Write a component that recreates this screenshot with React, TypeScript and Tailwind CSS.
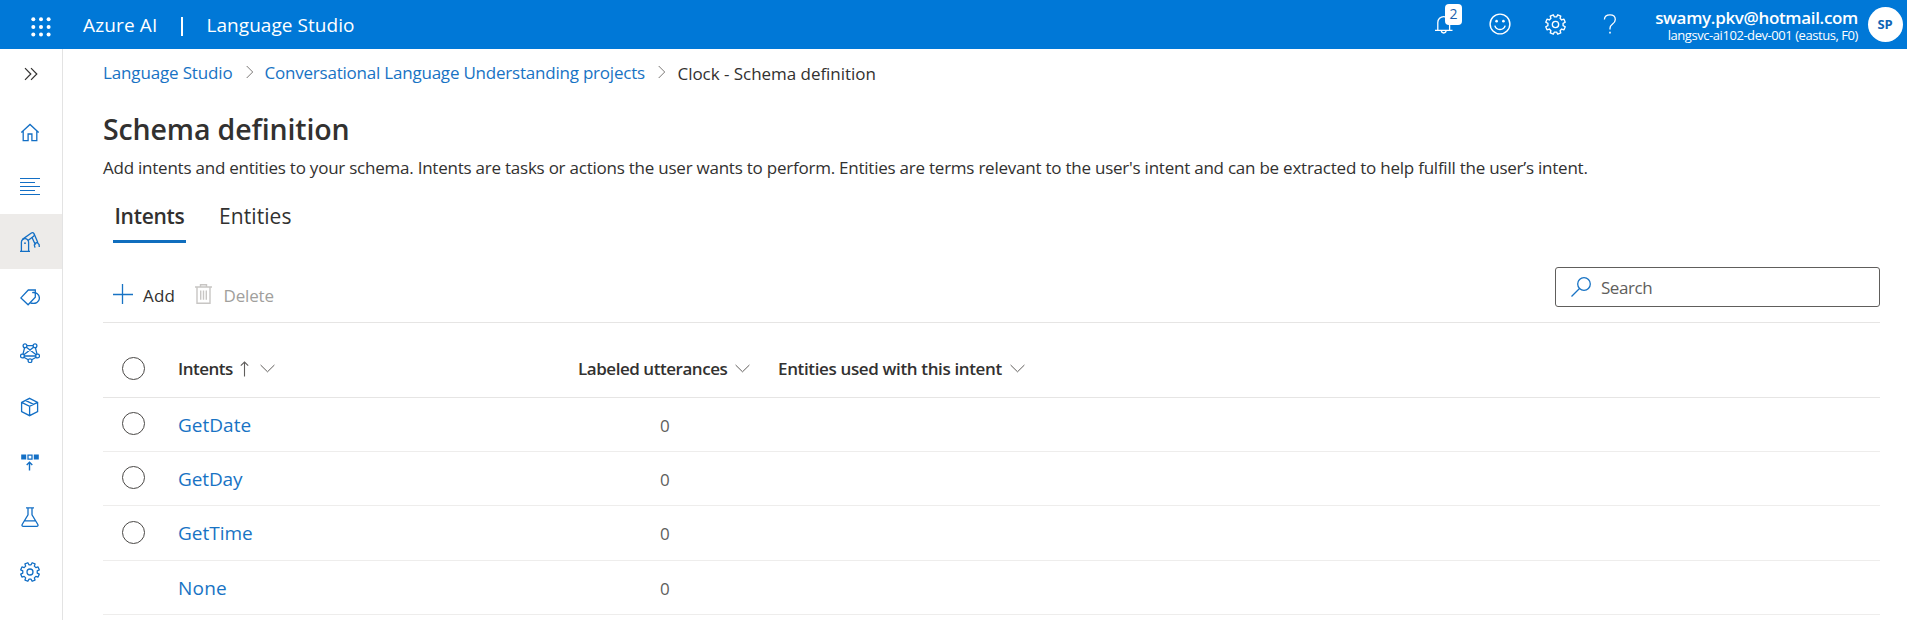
import type { ReactNode } from 'react';

function gearPath(c: number, outer: number, inner: number): string {
  const pts: string[] = [];
  for (let k = 0; k < 8; k++) {
    const mid = 22.5 + k * 45;
    const corners: [number, number][] = [
      [mid - 14, inner],
      [mid - 9.5, outer],
      [mid + 9.5, outer],
      [mid + 14, inner],
    ];
    for (const [deg, r] of corners) {
      const a = (deg * Math.PI) / 180;
      pts.push(`${(c + r * Math.cos(a)).toFixed(2)} ${(c + r * Math.sin(a)).toFixed(2)}`);
    }
  }
  return `M${pts.join('L')}Z`;
}

function Icon({ children, className = 'h-5 w-5' }: { children: ReactNode; className?: string }) {
  return (
    <svg
      viewBox="0 0 20 20"
      fill="none"
      stroke="currentColor"
      strokeWidth={1.3}
      className={`shrink-0 ${className}`}
    >
      {children}
    </svg>
  );
}

const Gear = ({ className }: { className?: string }) => (
  <Icon className={className}>
    <path d={gearPath(10, 9.5, 7.3)} strokeLinejoin="round" />
    <circle cx="10" cy="10" r="3" />
  </Icon>
);

const ChevronRight = ({ className = '' }: { className?: string }) => (
  <svg viewBox="0 0 8 14" fill="none" stroke="#7a7876" strokeWidth={1} className={`h-3.5 w-2 shrink-0 ${className}`}>
    <path d="M.7 1l6 6-6 6" />
  </svg>
);

const ChevronDown = ({ className = '' }: { className?: string }) => (
  <svg viewBox="0 0 15 9" fill="none" stroke="#605e5c" strokeWidth={1} className={`h-[9px] w-[15px] shrink-0 ${className}`}>
    <path d="M.6 1l6.9 6.8L14.4 1" />
  </svg>
);

const Circle = () => (
  <span className="-mt-[2px] block h-[23px] w-[23px] shrink-0 rounded-full border-[1.4px] border-[#4a4846]" />
);

const navItems: { name: string; icon: ReactNode; active?: boolean }[] = [
  {
    name: 'home',
    icon: (
      <Icon>
        <path d="M1.3 10.500L10 2.500l8.7 8M3.2 9v9.600h4.9v-6.600h3.8v6.600h4.9V9" />
      </Icon>
    ),
  },
  {
    name: 'text',
    icon: (
      <Icon>
        <path d="M0 1.500h20M0 5.500h15M0 9.500h20M0 13.500h15M0 17.500h20" strokeWidth={1.2} />
      </Icon>
    ),
  },
  {
    name: 'robot',
    active: true,
    icon: (
      <Icon>
        <path d="M0 19.3h10M1.4 19.3v-9a3.6 3.6 0 0 1 7.2 0v9" />
        <path d="M2.4 7.4L11 1.2q1.8-1.2 3 .4.9 1.4-.4 2.6L8 8.6" />
        <path d="M14.3 2.2l3.6 8.6M11.9 5.3l3 6.4M14.6 11.3l3.6-1.3M16.2 11l-1.9 2 .7 2.6M17.3 10.6l1.8 2 .2 2.4" />
        <circle cx="5" cy="11.2" r=".9" fill="currentColor" stroke="none" />
      </Icon>
    ),
  },
  {
    name: 'tags',
    icon: (
      <Icon className="mt-[2px] h-5 w-5">
        <path d="M8.3 2h7v7.3l-7.2 7.5L.9 9.9z" />
        <path d="M12.2 4.6c4-.5 7.2 1.6 7.2 5.6 0 4-4 6-9 4.8" />
      </Icon>
    ),
  },
  {
    name: 'graph',
    icon: (
      <Icon className="mt-[2px] h-5 w-5">
        <path d="M6.900 2.700h6.200M4.600 4.700L3 11.200M15.400 4.700l1.600 6.500M6.400 4.200L16.200 11.800M13.600 4.200L3.800 11.800M4.200 13h11.600M3.800 14.300l4.500 2.500M16.200 14.300l-4.500 2.500" />
        <circle cx="5" cy="2.800" r="1.900" />
        <circle cx="15" cy="2.800" r="1.900" />
        <circle cx="2.400" cy="13" r="1.900" />
        <circle cx="17.600" cy="13" r="1.900" />
        <circle cx="10" cy="17.700" r="1.900" />
      </Icon>
    ),
  },
  {
    name: 'package',
    icon: (
      <Icon className="mt-px h-5 w-5">
        <path d="M9.600 1.300l8 4v9.400l-8 4-8-4V5.300zM1.600 5.300l8 4 8-4M9.600 9.300v9.400M5.400 3.400l8.200 4" />
      </Icon>
    ),
  },
  {
    name: 'deploy',
    icon: (
      <Icon className="mb-[2px] h-5 w-5">
        <path d="M1.200 3.600h5v5h-5zM13.800 3.600h5v5h-5z" fill="currentColor" stroke="none" />
        <path d="M8 4.200h4v4H8z" />
        <path d="M9.500 19.400V11.500M6.700 14l2.800-2.800L12.300 14" strokeWidth={1.400} />
      </Icon>
    ),
  },
  {
    name: 'flask',
    icon: (
      <Icon>
        <path d="M6 .8h8M8 .8v7L2.300 17.200q-1 2.100 1 2.100h13.400q2 0 1-2.100L12 7.800v-7M4.600 13.800h10.800" />
      </Icon>
    ),
  },
  { name: 'settings', icon: <Gear /> },
];

const rows = [
  { name: 'GetDate', height: 'h-[54px]', spacing: 'tracking-[0.02px]', selectable: true },
  { name: 'GetDay', height: 'h-[54px]', spacing: 'tracking-[-0.12px]', selectable: true },
  { name: 'GetTime', height: 'h-[55px]', spacing: 'tracking-[-0.02px]', selectable: true },
  { name: 'None', height: 'h-[54px]', spacing: 'tracking-[0.2px]', selectable: false },
];

function TopBar() {
  return (
    <header className="flex h-[49px] shrink-0 items-center bg-[#0078d7] text-white">
      <svg viewBox="0 0 20 20" fill="currentColor" className="mt-1 ml-[30.500px] h-5 w-5">
        {[2.3, 10, 17.6].map((y) => [2.3, 10, 17.6].map((x) => <circle key={`${x}-${y}`} cx={x} cy={y} r="2" />))}
      </svg>
      <span className="ml-[32.500px] w-[97px] text-[19px] leading-7 tracking-[0.15px]">Azure AI</span>
      <span className="mt-1 ml-px h-[19px] w-[1.500px] bg-white" />
      <span className="ml-[24px] text-[19px] leading-7 tracking-[0.05px]">Language Studio</span>

      <div className="ml-auto flex items-center">
        <div className="relative mr-[35px] -mt-[2px]">
          <Icon>
            <path d="M1 16.300h17.500M3.800 16.300V8.500a5.900 5.900 0 0 1 11.800 0v7.800M7.300 16.600a2.400 2.400 0 0 0 4.800 0" />
          </Icon>
          <span className="absolute -top-[10px] left-[11px] flex h-[21px] w-[17px] items-center justify-center rounded-[4px] bg-white text-[14px] leading-none text-[#1a5fae]">
            2
          </span>
        </div>
        <Icon className="-mt-px h-[22px] w-[22px]">
          <circle cx="10" cy="10" r="9" />
          <path d="M5.300 11.500a4.900 4.900 0 0 0 9.400 0" />
          <circle cx="6.900" cy="7.400" r="1.200" fill="currentColor" stroke="none" />
          <circle cx="13.100" cy="7.400" r="1.200" fill="currentColor" stroke="none" />
        </Icon>
        <Gear className="-mt-px ml-[34px] h-[21px] w-[21px]" />
        <Icon className="-mt-px ml-[34px] h-5 w-5">
          <path d="M4.400 5.500Q4.600.8 10 .8q5.300 0 5.300 4.600 0 2.500-2.700 4.600Q10 12 10 14.200v1.200" />
          <path d="M10 17.800v1.700" strokeWidth={1.600} />
        </Icon>
        <div className="mt-px ml-[35px] flex w-[203px] flex-col items-end whitespace-nowrap">
          <span className="text-[17px] leading-[19px] font-semibold tracking-[-0.33px]">swamy.pkv@hotmail.com</span>
          <span className="mt-[1px] text-[13px] leading-[15px] tracking-[-0.44px]">langsvc-ai102-dev-001 (eastus, F0)</span>
        </div>
        <span className="mr-[4.500px] ml-[9.500px] flex h-[35px] w-[35px] items-center justify-center rounded-full bg-white text-[13px] leading-none font-bold tracking-[-0.16px] text-[#0f65b5]">
          SP
        </span>
      </div>
    </header>
  );
}

function SideNav() {
  return (
    <nav className="flex w-[63px] shrink-0 flex-col border-r border-[#e3e3e3] text-[#136fc5]">
      <div className="flex h-[55px] items-start justify-center pt-[18px] text-[#323130]">
        <svg viewBox="0 0 14 14" fill="none" stroke="currentColor" strokeWidth={1.200} className="-ml-px h-3.5 w-3.5">
          <path d="M1 1.200L6.800 7 1 12.800M7 1.200L12.800 7 7 12.800" />
        </svg>
      </div>
      {navItems.map((item) => (
        <div
          key={item.name}
          className={`flex h-[55px] shrink-0 items-center justify-center pr-[2px] ${item.active ? 'bg-[#edebe9]' : ''}`}
        >
          {item.icon}
        </div>
      ))}
    </nav>
  );
}

export default function App() {
  return (
    <div className="flex h-[620px] w-full flex-col overflow-hidden bg-white font-['Open_Sans','Noto_Sans',sans-serif] text-[17px] text-[#323130]">
      <TopBar />
      <div className="flex min-h-0 grow">
        <SideNav />
        <main className="min-w-0 grow pr-[27px] pl-[40px]">
          <div className="flex h-[46px] items-center whitespace-nowrap text-[#1873c4]">
            <a className="mt-[2px] w-[132px] tracking-[-0.15px]">Language Studio</a>
            <ChevronRight className="ml-[11px]" />
            <a className="mt-[2px] ml-[10.500px] w-[382px] tracking-[-0.216px]">
              Conversational Language Understanding projects
            </a>
            <ChevronRight className="ml-[11px]" />
            <span className="mt-[4px] ml-[12px] tracking-[-0.04px] text-[#323130]">Clock - Schema definition</span>
          </div>
          <h1 className="mt-[14px] text-[28.500px] leading-10 font-semibold tracking-[-0.130px]">Schema definition</h1>
          <p className="mt-[7px] text-[17px] leading-6 tracking-[-0.234px] whitespace-nowrap">
            Add intents and entities to your schema. Intents are tasks or actions the user wants to perform. Entities are
            terms relevant to the user's intent and can be extracted to help fulfill the user’s intent.
          </p>
          <div className="mt-[23px] ml-[10px] flex text-[21px] leading-[27px]">
            <div className="w-[73px] border-b-[3px] border-[#106ebe] pb-[10px] pl-[1.500px] font-semibold tracking-[-0.300px]">
              Intents
            </div>
            <div className="ml-[33px] tracking-[0.080px]">Entities</div>
          </div>

          <div className="flex h-[80px] items-start justify-between border-b border-[#e6e5e4]">
            <div className="mt-[41px] flex h-6 items-center">
              <svg viewBox="0 0 20 20" fill="none" stroke="#1873c4" strokeWidth={1.300} className="-mt-[4px] ml-[9.500px] h-5 w-5">
                <path d="M9.500 0v20M0 10.500h20" />
              </svg>
              <span className="ml-[10.500px] w-[52px] text-[17px] leading-6 tracking-[0.200px]">Add</span>
              <svg viewBox="0 0 17 20" fill="none" stroke="#c8c6c4" strokeWidth={1.400} className="-mt-[4px] h-5 w-[17px]">
                <path d="M0 3h17M5.500 3V.8h6V3M2 3v16.200h13V3M5.700 6.500v9.200M8.500 6.500v9.200M11.300 6.500v9.200" />
              </svg>
              <span className="ml-[11.500px] text-[17px] leading-6 tracking-[-0.160px] text-[#a19f9d]">Delete</span>
            </div>
            <div className="mt-6 flex h-10 w-[325px] items-center rounded-[3px] border border-[#605e5c] pl-[15px]">
              <Icon className="h-5 w-5 text-[#1873c4]">
                <circle cx="13" cy="7" r="6.300" />
                <path d="M8.500 11.500L.5 19.500" />
              </Icon>
              <span className="mt-[2px] ml-[10px] tracking-[-0.450px] text-[#605e5c]">Search</span>
            </div>
          </div>

          <div className="grid h-[75px] grid-cols-[75px_400px_200px_1fr] items-center border-b border-[#e6e5e4] pt-[18px] font-semibold whitespace-nowrap">
            <div className="pl-[18.500px]">
              <Circle />
            </div>
            <div className="flex items-center tracking-[-0.500px]">
              <span className="w-[59px]">Intents</span>
              <svg viewBox="0 0 9 16" fill="none" stroke="#605e5c" strokeWidth={1.100} className="ml-[3px] h-4 w-[9px]">
                <path d="M4.500 15.500V1M.8 4.700L4.500 1l3.700 3.700" />
              </svg>
              <ChevronDown className="-mt-[2px] ml-[11px]" />
            </div>
            <div className="flex items-center tracking-[-0.458px]">
              <span className="w-[157px]">Labeled utterances</span>
              <ChevronDown className="-mt-[2px]" />
            </div>
            <div className="flex items-center tracking-[-0.360px]">
              <span className="w-[232px]">Entities used with this intent</span>
              <ChevronDown className="-mt-[2px]" />
            </div>
          </div>
          {rows.map((row) => (
            <div
              key={row.name}
              className={`grid grid-cols-[75px_400px_200px_1fr] items-center border-b border-[#eeedec] ${row.height}`}
            >
              <div className="pl-[18.500px]">{row.selectable && <Circle />}</div>
              <a className={`text-[19px] leading-7 text-[#1873c4] ${row.spacing}`}>{row.name}</a>
              <span className="pt-[2px] pl-[82px] text-[#605e5c]">0</span>
              <span />
            </div>
          ))}
        </main>
      </div>
    </div>
  );
}
